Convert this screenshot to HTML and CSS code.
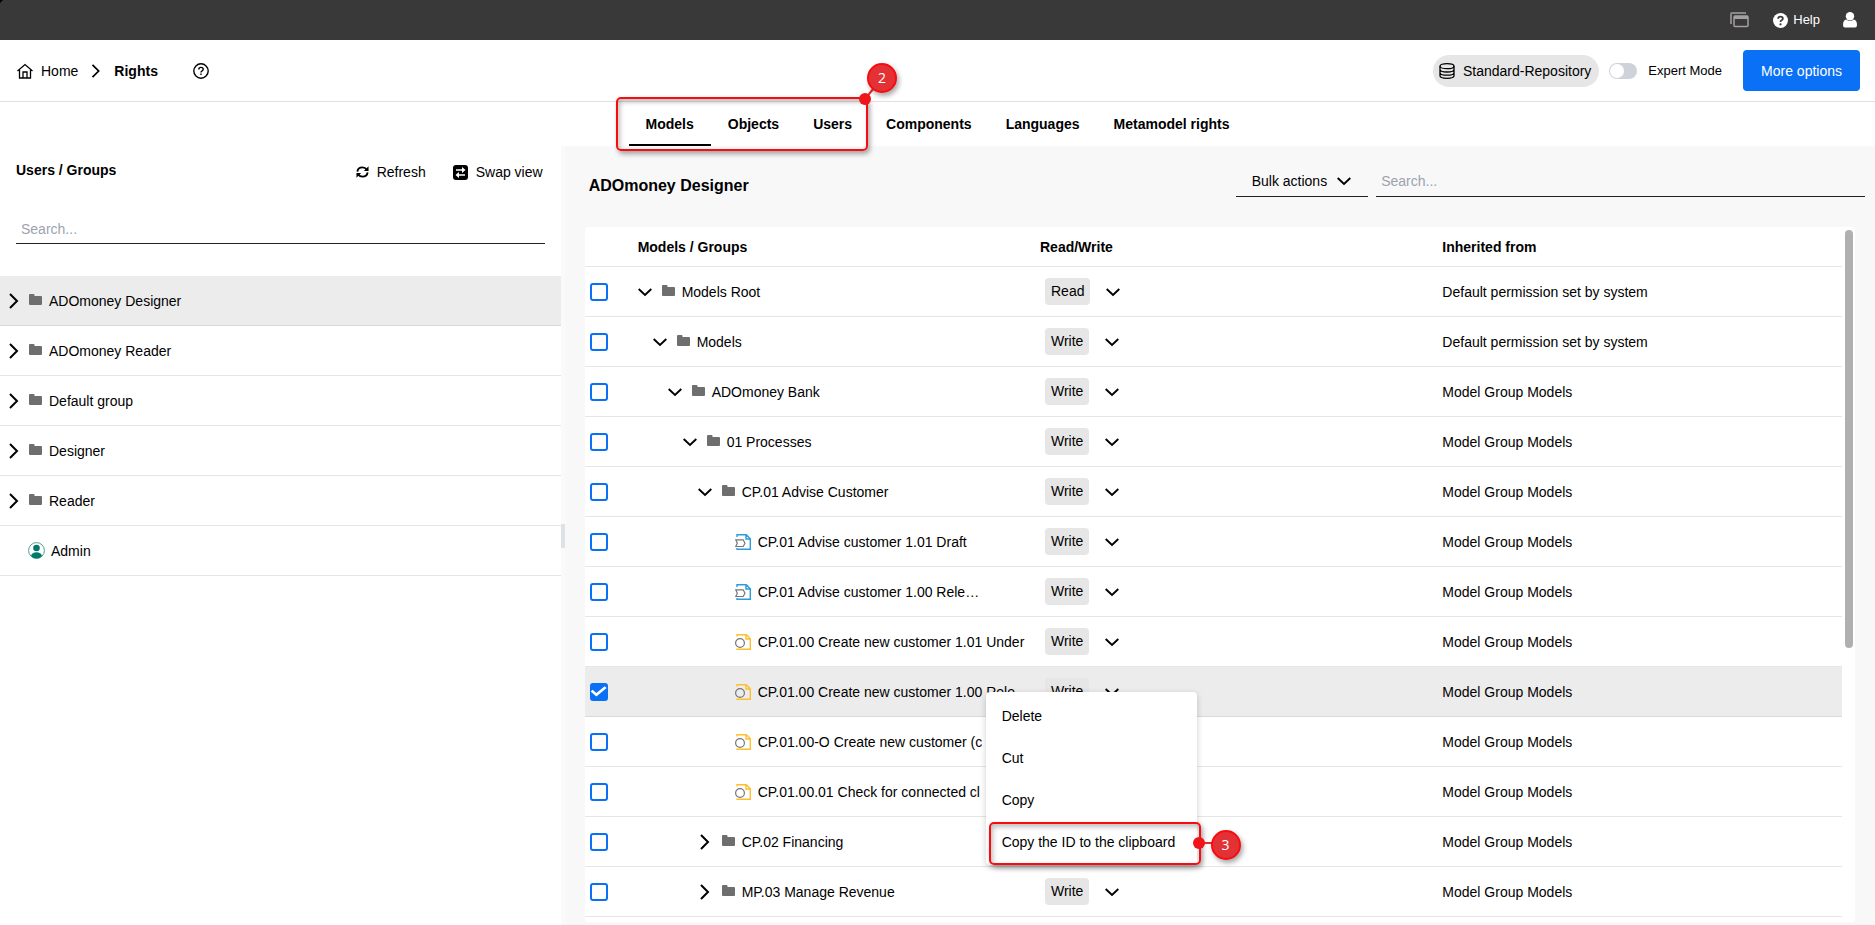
FILE: index.html
```html
<!DOCTYPE html>
<html lang="en">
<head>
    <meta charset="UTF-8">
    <meta name="viewport" content="width=device-width, initial-scale=1.0">
    <title>Rights</title>
    <link rel="stylesheet" href="styles.css">
</head>
<body>
    <!-- Icon definitions -->
    <svg class="sprite" aria-hidden="true">
        <symbol id="i-down" viewBox="0 0 14 14"><path d="M.7 4l6.300 6 6.300-6" fill="none" stroke="currentColor" stroke-width="1.900"/></symbol>
        <symbol id="i-right" viewBox="0 0 14 16"><path d="M3 1l7 7-7 7" fill="none" stroke="currentColor" stroke-width="2"/></symbol>
        <symbol id="i-folder" viewBox="0 0 13 14"><path d="M0 1q0-1 1-1h3.500q1 0 1 1v1H12q1 0 1 1v7q0 1-1 1H1q-1 0-1-1z" fill="#6e6e6e"/></symbol>
        <symbol id="i-map" viewBox="0 0 16 16">
            <path d="M2 3V.7h9.300l4 4v10.600H2V14M11 .7V5h4.300" fill="none" stroke="#2d9cdb" stroke-width="1.400"/>
            <path d="M.8 5.800h7.400L10 9.300l-1.800 3.200H.8l1.500-3.200z" fill="#fff" stroke="#777" stroke-width="1.200"/>
        </symbol>
        <symbol id="i-process" viewBox="0 0 16 16">
            <path d="M2 2.500V.7h9.300l4 4v10.600H2V14.500M11 .7V5h4.300" fill="none" stroke="#fdbf2d" stroke-width="1.400"/>
            <circle cx="5" cy="9" r="4.400" fill="none" stroke="#777" stroke-width="1.200"/>
        </symbol>
    </svg>

    <div class="topbar">
        <button class="top-btn" aria-label="Windows">
            <svg width="20" height="16" viewBox="0 0 20 16"><path d="M1 12V2q0-1 1-1h14" fill="none" stroke="#8a8787" stroke-width="2"/><rect x="4" y="4" width="14" height="10.500" rx="1" fill="none" stroke="#a5a0a0" stroke-width="1.500"/><path d="M4 4h14v3H4z" fill="#a5a0a0"/></svg>
        </button>
        <button class="top-btn">
            <svg width="15" height="15" viewBox="0 0 16 16"><circle cx="8" cy="8" r="8" fill="#fff"/><path d="M5.500 6.200q0-2.400 2.500-2.400t2.500 2.100q0 1.200-1.300 1.900Q8 8.400 8 9.500" fill="none" stroke="#393939" stroke-width="1.900"/><circle cx="8" cy="12" r="1.200" fill="#393939"/></svg>
            Help
        </button>
        <button class="top-btn" aria-label="User">
            <svg width="14" height="16" viewBox="0 0 14 16"><circle cx="7" cy="4.300" r="4.200" fill="#fff"/><path d="M0 13q0-5 3.300-5.500Q7 10.500 10.700 7.500 14 8 14 13q0 2.500-2 2.500H2Q0 15.500 0 13z" fill="#fff"/></svg>
        </button>
    </div>

    <header class="header">
        <nav class="breadcrumb">
            <a href="#" class="home">
                <svg width="16" height="16" viewBox="0 0 16 16" fill="none" stroke="currentColor" stroke-width="1.300"><path d="M.5 8L8 1.500 15.500 8M2.500 7v8h11V7"/><path d="M6 15V9h4v6"/></svg>
                Home
            </a>
            <svg class="crumb-sep" width="14" height="14"><use href="#i-right"/></svg>
            <b>Rights</b>
            <button class="icon-btn" aria-label="Page help">
                <svg width="16" height="16" viewBox="0 0 16 16" fill="none" stroke="currentColor" stroke-width="1.400"><circle cx="8" cy="8" r="7.200"/><path d="M5.800 6.400q0-2 2.200-2t2.200 1.800q0 1-1.100 1.600Q8 8.300 8 9.500"/><path d="M8 10.600v1.500"/></svg>
            </button>
        </nav>
        <div class="header-actions">
            <button class="repo">
                <svg width="16" height="16" viewBox="0 0 16 16" fill="none" stroke="currentColor" stroke-width="1.300"><ellipse cx="8" cy="3.200" rx="7" ry="2.500"/><path d="M1 3.200v9.600q0 2.500 7 2.500t7-2.500V3.200M1 6.500q0 2.500 7 2.500t7-2.500M1 9.700q0 2.500 7 2.500t7-2.500"/></svg>
                Standard-Repository
            </button>
            <label class="expert"><input type="checkbox" class="switch">Expert Mode</label>
            <button class="primary">More options</button>
        </div>
    </header>

    <nav class="tabs">
        <div class="tab-group">
            <button class="tab active">Models</button>
            <button class="tab">Objects</button>
            <button class="tab">Users</button>
            <div class="marker marker-tabs">
                <svg class="pin" width="40" height="50" viewBox="0 0 40 50"><path d="M8 36L25 15" stroke="#e8282b" stroke-width="2"/><circle cx="8" cy="36" r="6" fill="#f0141b"/></svg>
                <span class="bubble">2</span>
            </div>
        </div>
        <button class="tab">Components</button>
        <button class="tab">Languages</button>
        <button class="tab">Metamodel rights</button>
    </nav>

    <div class="main">
        <aside class="sidebar">
            <div class="side-head">
                <h2>Users / Groups</h2>
                <div class="side-tools">
                    <button class="tool">
                        <svg width="13" height="14" viewBox="0 0 14 14" fill="none" stroke="currentColor" stroke-width="2"><path d="M1.500 6.500Q2 2 7 2q3 0 4.500 2.300M12.500 7.500Q12 12 7 12q-3 0-4.500-2.300"/><path d="M13.500 .8v5h-5zM.5 13.200v-5h5z" fill="currentColor" stroke="none"/></svg>
                        Refresh
                    </button>
                    <button class="tool">
                        <svg width="15" height="15" viewBox="0 0 15 15"><rect width="15" height="15" rx="3"/><path d="M3 5h7M12 10H5" stroke="#fff" stroke-width="1.700"/><path d="M9 2l3.500 3L9 8zM6 7L2.500 10 6 13z" fill="#fff"/></svg>
                        Swap view
                    </button>
                </div>
            </div>
            <input type="text" class="search" placeholder="Search..." aria-label="Search users">
            <ul class="groups">
                <li class="selected"><svg class="arrow"><use href="#i-right"/></svg><svg class="folder"><use href="#i-folder"/></svg>ADOmoney Designer</li>
                <li><svg class="arrow"><use href="#i-right"/></svg><svg class="folder"><use href="#i-folder"/></svg>ADOmoney Reader</li>
                <li><svg class="arrow"><use href="#i-right"/></svg><svg class="folder"><use href="#i-folder"/></svg>Default group</li>
                <li><svg class="arrow"><use href="#i-right"/></svg><svg class="folder"><use href="#i-folder"/></svg>Designer</li>
                <li><svg class="arrow"><use href="#i-right"/></svg><svg class="folder"><use href="#i-folder"/></svg>Reader</li>
                <li class="user">
                    <svg width="17" height="17" viewBox="0 0 17 17"><circle cx="8.500" cy="8.500" r="7.900" fill="#fff" stroke="#4e9d90"/><circle cx="8.500" cy="6" r="3.300" fill="#00796b"/><path d="M3 14q1-3.700 5.500-3.700T14 14q-2.300 2.500-5.500 2.500T3 14z" fill="#00796b"/></svg>
                    Admin
                </li>
            </ul>
        </aside>

        <div class="splitter"><span class="grip"></span></div>

        <section class="content">
            <div class="content-head">
                <h1>ADOmoney Designer</h1>
                <button class="bulk">Bulk actions <svg width="14" height="14"><use href="#i-down"/></svg></button>
                <input type="text" class="search search-models" placeholder="Search..." aria-label="Search models">
            </div>

            <div class="card">
                <table>
                    <thead>
                        <tr><th class="col-check"></th><th class="col-name">Models / Groups</th><th class="col-rw">Read/Write</th><th>Inherited from</th></tr>
                    </thead>
                    <tbody>
                        <tr>
                            <td><input type="checkbox" class="check" aria-label="Models Root"></td>
                            <td><div class="node level-0"><svg class="arrow"><use href="#i-down"/></svg><svg class="folder"><use href="#i-folder"/></svg>Models Root</div></td>
                            <td><div class="access"><span class="chip">Read</span><button class="icon-btn" aria-label="Change access"><svg width="14" height="14"><use href="#i-down"/></svg></button></div></td>
                            <td>Default permission set by system</td>
                        </tr>
                        <tr>
                            <td><input type="checkbox" class="check" aria-label="Models"></td>
                            <td><div class="node level-1"><svg class="arrow"><use href="#i-down"/></svg><svg class="folder"><use href="#i-folder"/></svg>Models</div></td>
                            <td><div class="access"><span class="chip">Write</span><button class="icon-btn" aria-label="Change access"><svg width="14" height="14"><use href="#i-down"/></svg></button></div></td>
                            <td>Default permission set by system</td>
                        </tr>
                        <tr>
                            <td><input type="checkbox" class="check" aria-label="ADOmoney Bank"></td>
                            <td><div class="node level-2"><svg class="arrow"><use href="#i-down"/></svg><svg class="folder"><use href="#i-folder"/></svg>ADOmoney Bank</div></td>
                            <td><div class="access"><span class="chip">Write</span><button class="icon-btn" aria-label="Change access"><svg width="14" height="14"><use href="#i-down"/></svg></button></div></td>
                            <td>Model Group Models</td>
                        </tr>
                        <tr>
                            <td><input type="checkbox" class="check" aria-label="01 Processes"></td>
                            <td><div class="node level-3"><svg class="arrow"><use href="#i-down"/></svg><svg class="folder"><use href="#i-folder"/></svg>01 Processes</div></td>
                            <td><div class="access"><span class="chip">Write</span><button class="icon-btn" aria-label="Change access"><svg width="14" height="14"><use href="#i-down"/></svg></button></div></td>
                            <td>Model Group Models</td>
                        </tr>
                        <tr>
                            <td><input type="checkbox" class="check" aria-label="CP.01 Advise Customer"></td>
                            <td><div class="node level-4"><svg class="arrow"><use href="#i-down"/></svg><svg class="folder"><use href="#i-folder"/></svg>CP.01 Advise Customer</div></td>
                            <td><div class="access"><span class="chip">Write</span><button class="icon-btn" aria-label="Change access"><svg width="14" height="14"><use href="#i-down"/></svg></button></div></td>
                            <td>Model Group Models</td>
                        </tr>
                        <tr>
                            <td><input type="checkbox" class="check" aria-label="CP.01 Advise customer 1.01"></td>
                            <td><div class="node leaf"><svg class="model"><use href="#i-map"/></svg>CP.01 Advise customer 1.01 Draft</div></td>
                            <td><div class="access"><span class="chip">Write</span><button class="icon-btn" aria-label="Change access"><svg width="14" height="14"><use href="#i-down"/></svg></button></div></td>
                            <td>Model Group Models</td>
                        </tr>
                        <tr>
                            <td><input type="checkbox" class="check" aria-label="CP.01 Advise customer 1.00"></td>
                            <td><div class="node leaf"><svg class="model"><use href="#i-map"/></svg>CP.01 Advise customer 1.00 Rele…</div></td>
                            <td><div class="access"><span class="chip">Write</span><button class="icon-btn" aria-label="Change access"><svg width="14" height="14"><use href="#i-down"/></svg></button></div></td>
                            <td>Model Group Models</td>
                        </tr>
                        <tr>
                            <td><input type="checkbox" class="check" aria-label="CP.01.00 Create new customer 1.01"></td>
                            <td><div class="node leaf"><svg class="model"><use href="#i-process"/></svg>CP.01.00 Create new customer 1.01 Under</div></td>
                            <td><div class="access"><span class="chip">Write</span><button class="icon-btn" aria-label="Change access"><svg width="14" height="14"><use href="#i-down"/></svg></button></div></td>
                            <td>Model Group Models</td>
                        </tr>
                        <tr class="selected">
                            <td><input type="checkbox" class="check" aria-label="CP.01.00 Create new customer 1.00" checked></td>
                            <td><div class="node leaf"><svg class="model"><use href="#i-process"/></svg>CP.01.00 Create new customer 1.00 Rele…</div></td>
                            <td><div class="access"><span class="chip">Write</span><button class="icon-btn" aria-label="Change access"><svg width="14" height="14"><use href="#i-down"/></svg></button></div></td>
                            <td>Model Group Models</td>
                        </tr>
                        <tr>
                            <td><input type="checkbox" class="check" aria-label="CP.01.00-O Create new customer"></td>
                            <td><div class="node leaf"><svg class="model"><use href="#i-process"/></svg>CP.01.00-O Create new customer (c</div></td>
                            <td></td>
                            <td>Model Group Models</td>
                        </tr>
                        <tr>
                            <td><input type="checkbox" class="check" aria-label="CP.01.00.01 Check for connected clients"></td>
                            <td><div class="node leaf"><svg class="model"><use href="#i-process"/></svg>CP.01.00.01 Check for connected cl</div></td>
                            <td></td>
                            <td>Model Group Models</td>
                        </tr>
                        <tr>
                            <td><input type="checkbox" class="check" aria-label="CP.02 Financing"></td>
                            <td><div class="node level-4"><svg class="arrow"><use href="#i-right"/></svg><svg class="folder"><use href="#i-folder"/></svg>CP.02 Financing</div></td>
                            <td></td>
                            <td>Model Group Models</td>
                        </tr>
                        <tr>
                            <td><input type="checkbox" class="check" aria-label="MP.03 Manage Revenue"></td>
                            <td><div class="node level-4"><svg class="arrow"><use href="#i-right"/></svg><svg class="folder"><use href="#i-folder"/></svg>MP.03 Manage Revenue</div></td>
                            <td><div class="access"><span class="chip">Write</span><button class="icon-btn" aria-label="Change access"><svg width="14" height="14"><use href="#i-down"/></svg></button></div></td>
                            <td>Model Group Models</td>
                        </tr>
                    </tbody>
                </table>
                <span class="scroll-thumb"></span>

                <div class="context-menu">
                    <button>Delete</button>
                    <button>Cut</button>
                    <button>Copy</button>
                    <button>Copy the ID to the clipboard</button>
                    <div class="marker marker-menu">
                        <svg class="pin" width="40" height="14" viewBox="0 0 40 14"><path d="M7 7h16" stroke="#e8282b" stroke-width="2"/><circle cx="7" cy="7" r="6" fill="#f0141b"/></svg>
                        <span class="bubble">3</span>
                    </div>
                </div>
            </div>
        </section>
    </div>
</body>
</html>
```

FILE: styles.css
```css
* {
    box-sizing: border-box;
}
body {
    margin: 0;
    min-height: 100vh;
    display: flex;
    flex-direction: column;
    font-family: "Liberation Sans", Arial, sans-serif;
    font-size: 14px;
    line-height: 20px;
    color: #000;
    background-color: #fff;
}
button, input {
    font: inherit;
    color: inherit;
}
button {
    background: none;
    border: none;
    padding: 0;
    display: flex;
    align-items: center;
    cursor: pointer;
    white-space: nowrap;
}
svg {
    flex: none;
    display: block;
}
h1, h2 {
    margin: 0;
    line-height: 20px;
}
h1 {
    font-size: 16px;
}
h2 {
    font-size: 14px;
}
.sprite {
    position: absolute;
    width: 0;
    height: 0;
}

/* Top bar */
.topbar {
    height: 40px;
    background: #393939 radial-gradient(circle at 100% 100%, #393939 6px, #000 7px) 0 0 / 6px 6px no-repeat;
    display: flex;
    align-items: center;
    justify-content: flex-end;
    gap: 23px;
    padding-right: 18px;
}
.top-btn {
    color: #fff;
    font-size: 13px;
    gap: 5px;
}

/* Header */
.header {
    height: 62px;
    border-bottom: 1px solid #e0e0e0;
    display: flex;
    align-items: center;
    justify-content: space-between;
    padding: 0 15px 0 17px;
}
.breadcrumb, .header-actions {
    display: flex;
    align-items: center;
}
.home {
    display: flex;
    align-items: center;
    gap: 8px;
    color: inherit;
    text-decoration: none;
}
.crumb-sep {
    margin: 0 11px 0 11px;
}
.breadcrumb .icon-btn {
    margin-left: 35px;
}
.repo {
    height: 32px;
    padding: 0 8px 0 6px;
    gap: 8px;
    border-radius: 16px;
    background-color: #e6e6e6;
}
.expert {
    display: flex;
    align-items: center;
    gap: 11px;
    margin: 0 21px 0 10px;
    font-size: 13px;
}
.switch {
    appearance: none;
    width: 28px;
    height: 16px;
    margin: 0;
    padding: 1px;
    border-radius: 8px;
    background-color: #ced3db;
}
.switch::before {
    content: "";
    display: block;
    width: 14px;
    height: 14px;
    border-radius: 50%;
    background-color: #fff;
}
.primary {
    height: 41px;
    padding: 0 18px;
    border-radius: 4px;
    background-color: #0a70f5;
    color: #fff;
}

/* Tabs */
.tabs {
    height: 44px;
    display: flex;
    justify-content: center;
}
.tab-group {
    position: relative;
    display: flex;
}
.tab {
    height: 44px;
    padding: 0 17px;
    font-weight: bold;
    border-top: 2px solid transparent;
    border-bottom: 2px solid transparent;
}
.tab.active {
    border-bottom-color: #000;
}

/* Left panel */
.main {
    flex: 1;
    display: flex;
}
.sidebar {
    flex: 0 0 29.9%;
    padding-top: 14px;
}
.side-head {
    display: flex;
    justify-content: space-between;
    padding: 0 18px 0 16px;
}
.side-tools {
    display: flex;
    gap: 27px;
    padding-top: 2px;
}
.tool {
    gap: 8px;
}
.search {
    display: block;
    width: 100%;
    height: 32px;
    padding: 2px 5px 0;
    border: none;
    border-bottom: 1px solid #222;
    background: none;
    outline: none;
}
.search::placeholder {
    color: #9ca3af;
    opacity: 1;
}
.sidebar .search {
    width: calc(100% - 32px);
    margin: 30px 16px 32px;
}
.groups {
    list-style: none;
    margin: 0;
    padding: 0;
}
.groups li {
    height: 50px;
    display: flex;
    align-items: center;
    padding-left: 7px;
    border-bottom: 1px solid #e6e6e6;
}
.groups li.user {
    padding-left: 28px;
    gap: 6px;
}
.groups .selected {
    background-color: #ececec;
    border-bottom-color: #d9d9d9;
}
.arrow {
    width: 14px;
    height: 16px;
    margin-right: 8px;
}
.folder {
    width: 13px;
    height: 14px;
    margin-right: 7px;
}
.splitter {
    width: 4px;
    display: flex;
    background-color: #fafafa;
}
.grip {
    width: 4px;
    height: 24px;
    margin-top: 378px;
    background-color: #dde2e6;
}

/* Right panel */
.content {
    flex: 1;
    min-width: 0;
    padding: 18px 20px 3px;
    background-color: #f8f8f8;
}
.content-head {
    display: flex;
    align-items: center;
    margin: 0 -10px 30px 4px;
}
.content-head h1 {
    flex: 1;
    padding-top: 10px;
}
.bulk {
    height: 33px;
    padding: 2px 17px 0 16px;
    gap: 10px;
    border-bottom: 1px solid #222;
    margin-right: 8px;
}
.search-models {
    width: 38.3%;
    height: 33px;
}
.card {
    position: relative;
    padding: 0 13px 5px 0;
    border-radius: 4px;
    background-color: #fff;
}
table {
    width: 100%;
    table-layout: fixed;
    border-collapse: separate;
    border-spacing: 0;
}
th {
    height: 40px;
    padding: 0;
    text-align: left;
    border-bottom: 1px solid #e6e6e6;
}
td {
    height: 50px;
    padding: 0;
    border-bottom: 1px solid #e6e6e6;
}
.col-check {
    width: 53px;
}
.col-name, .col-rw {
    width: 32%;
}
tr.selected td {
    background-color: #ececec;
    border-bottom-color: #d9d9d9;
}
.check {
    appearance: none;
    display: grid;
    place-content: center;
    width: 18px;
    height: 18px;
    margin: 0 0 0 5px;
    border: 2px solid #0a70f5;
    border-radius: 3px;
    background-color: #fff;
}
.check:checked {
    background-color: #0a70f5;
}
.check:checked::before {
    content: "";
    width: 16px;
    height: 12px;
    background-color: #fff;
    clip-path: polygon(0 50%, 12% 36%, 36% 62%, 88% 6%, 100% 20%, 36% 92%);
}
.node {
    display: flex;
    align-items: center;
    white-space: nowrap;
}
.level-1 {
    padding-left: 15px;
}
.level-2 {
    padding-left: 30px;
}
.level-3 {
    padding-left: 45px;
}
.level-4 {
    padding-left: 60px;
}
.leaf {
    padding-left: 97px;
}
.node .folder {
    margin-left: 2px;
}
.model {
    width: 16px;
    height: 16px;
    margin-right: 7px;
}
.access {
    display: flex;
    align-items: center;
    gap: 16px;
    padding-left: 5px;
}
.chip {
    height: 27px;
    line-height: 27px;
    padding: 0 6px;
    border-radius: 4px;
    background-color: #e6e6e6;
}
.scroll-thumb {
    position: absolute;
    top: 3px;
    right: 2px;
    width: 8px;
    height: 418px;
    border-radius: 4px;
    background-color: #b0b0b0;
}

/* Context menu */
.context-menu {
    position: absolute;
    left: 401px;
    top: 465px;
    width: 211px;
    padding: 3px 0 2px;
    border-radius: 4px;
    background-color: #fff;
    box-shadow: 0 2px 6px rgba(0, 0, 0, 0.2);
}
.context-menu button {
    width: 100%;
    height: 42px;
    padding: 0 16px;
}

/* Numbered markers */
.marker {
    position: absolute;
    border: 2px solid #f80c10;
    border-radius: 5px;
    box-shadow: 2px 3px 5px rgba(0, 0, 0, 0.35), inset 2px 3px 5px rgba(0, 0, 0, 0.25);
    pointer-events: none;
}
.marker-tabs {
    inset: -5px 1px -5px -13px;
}
.marker-menu {
    inset: auto -4px 0 3px;
    height: 43px;
}
.pin, .bubble {
    position: absolute;
}
.bubble {
    width: 30px;
    height: 30px;
    line-height: 26px;
    border: 2px solid #f80c10;
    border-radius: 50%;
    background-color: #e23236;
    color: #fff;
    font-family: "Open Sans", sans-serif;
    text-align: center;
    box-shadow: 2px 3px 5px rgba(0, 0, 0, 0.35);
}
.marker-tabs .pin {
    top: -36px;
    right: -31px;
}
.marker-tabs .bubble {
    top: -36px;
    right: -31px;
}
.marker-menu .pin {
    top: 12px;
    right: -33px;
}
.marker-menu .bubble {
    top: 6px;
    right: -42px;
}
```
